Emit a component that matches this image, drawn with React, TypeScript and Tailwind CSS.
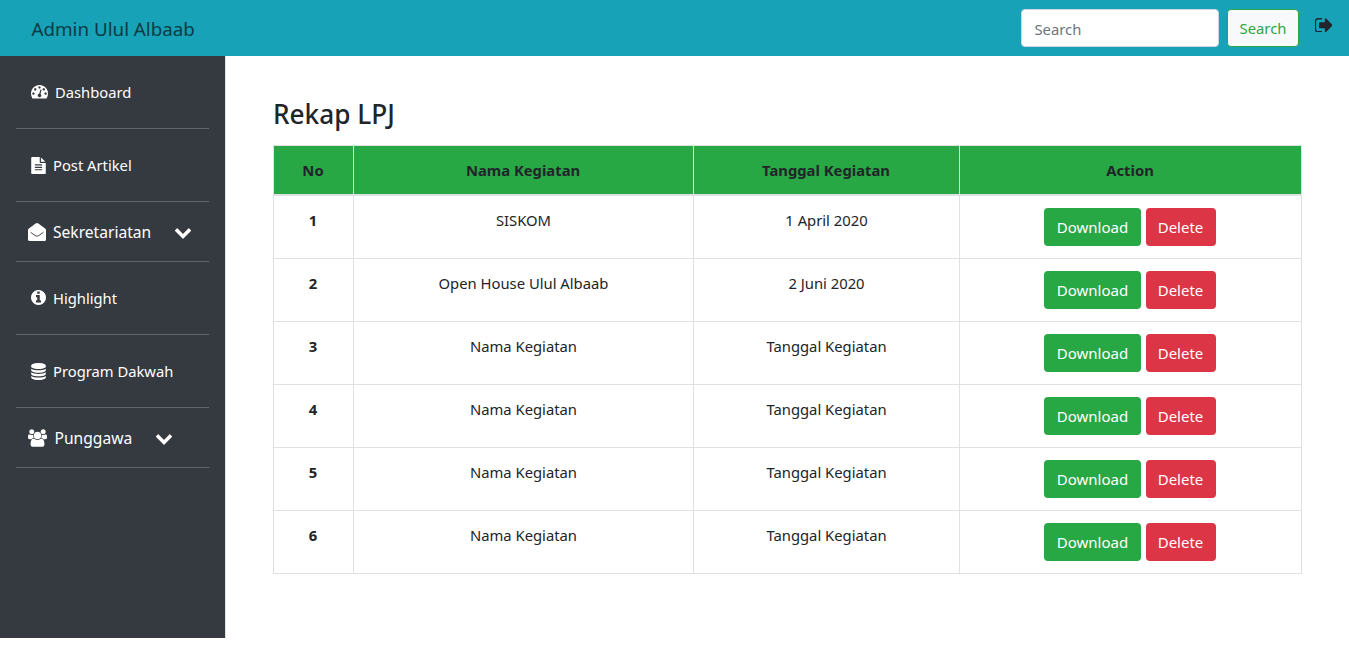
import type { ReactNode } from "react";

const rows = [
  ["SISKOM", "1 April 2020"],
  ["Open House Ulul Albaab", "2 Juni 2020"],
  ["Nama Kegiatan", "Tanggal Kegiatan"],
  ["Nama Kegiatan", "Tanggal Kegiatan"],
  ["Nama Kegiatan", "Tanggal Kegiatan"],
  ["Nama Kegiatan", "Tanggal Kegiatan"],
];

const icons = {
  dashboard:
    "M384 1152q0-53-37.5-90.5t-90.5-37.5-90.5 37.5-37.5 90.5 37.5 90.5 90.5 37.5 90.5-37.5 37.5-90.5zm192-448q0-53-37.5-90.5t-90.5-37.5-90.5 37.5-37.5 90.5 37.5 90.5 90.5 37.5 90.5-37.5 37.5-90.5zm428 481l101-382q6-26-7.5-48.5t-38.5-29.5-48 6.5-30 39.5l-101 382q-60 5-107 43.5t-63 98.5q-20 77 20 146t117 89 146-20 89-117q16-60-6-117t-72-91zm660-33q0-53-37.5-90.5t-90.5-37.5-90.5 37.5-37.5 90.5 37.5 90.5 90.5 37.5 90.5-37.5 37.5-90.5zm-640-640q0-53-37.5-90.5t-90.5-37.5-90.5 37.5-37.5 90.5 37.5 90.5 90.5 37.5 90.5-37.5 37.5-90.5zm448 192q0-53-37.5-90.5t-90.5-37.5-90.5 37.5-37.5 90.5 37.5 90.5 90.5 37.5 90.5-37.5 37.5-90.5zm320 448q0 261-141 483-19 29-54 29h-1402q-35 0-54-29-141-221-141-483 0-182 71-348t191-286 286-191 348-71 348 71 286 191 191 286 71 348z",
  file:
    "M1596 476q14 14 28 36h-472v-472q22 14 36 28zm-476 164h544v1056q0 40-28 68t-68 28h-1344q-40 0-68-28t-28-68v-1600q0-40 28-68t68-28h800v544q0 40 28 68t68 28zm160 736v-64q0-14-9-23t-23-9h-704q-14 0-23 9t-9 23v64q0 14 9 23t23 9h704q14 0 23-9t9-23zm0-256v-64q0-14-9-23t-23-9h-704q-14 0-23 9t-9 23v64q0 14 9 23t23 9h704q14 0 23-9t9-23zm0-256v-64q0-14-9-23t-23-9h-704q-14 0-23 9t-9 23v64q0 14 9 23t23 9h704q14 0 23-9t9-23z",
  info:
    "M1152 1376v-160q0-14-9-23t-23-9h-96v-512q0-14-9-23t-23-9h-320q-14 0-23 9t-9 23v160q0 14 9 23t23 9h96v320h-96q-14 0-23 9t-9 23v160q0 14 9 23t23 9h448q14 0 23-9t9-23zm-128-896v-160q0-14-9-23t-23-9h-192q-14 0-23 9t-9 23v160q0 14 9 23t23 9h192q14 0 23-9t9-23zm640 416q0 209-103 385.5t-279.5 279.5-385.5 103-385.5-103-279.5-279.5-103-385.5 103-385.5 279.5-279.5 385.5-103 385.5 103 279.5 279.5 103 385.5z",
  database:
    "M896 768q237 0 443-43t325-127v170q0 69-103 128t-280 93.5-385 34.5-385-34.5-280-93.5-103-128v-170q119 84 325 127t443 43zm0 768q237 0 443-43t325-127v170q0 69-103 128t-280 93.5-385 34.5-385-34.5-280-93.5-103-128v-170q119 84 325 127t443 43zm0-384q237 0 443-43t325-127v170q0 69-103 128t-280 93.5-385 34.5-385-34.5-280-93.5-103-128v-170q119 84 325 127t443 43zm0-1152q208 0 385 34.5t280 93.5 103 128v128q0 69-103 128t-280 93.5-385 34.5-385-34.5-280-93.5-103-128v-128q0-69 103-128t280-93.5 385-34.5z",
  users:
    "M593 896q-162 5-265 128h-134q-82 0-138-40.5t-56-118.5q0-353 124-353 6 0 43.5 21t97.5 42.5 119 21.5q67 0 133-23-5 37-5 66 0 139 81 256zm1071 637q0 120-73 189.5t-194 69.5h-874q-121 0-194-69.5t-73-189.5q0-53 3.5-103.5t14-109 26.5-108.5 43-97.5 62-81 85.5-53.5 111.5-20q10 0 43 21.5t73 48 107 48 135 21.5 135-21.5 107-48 73-48 43-21.5q61 0 111.5 20t85.5 53.5 62 81 43 97.5 26.5 108.5 14 109 3.5 103.5zm-1024-1277q0 106-75 181t-181 75-181-75-75-181 75-181 181-75 181 75 75 181zm704 384q0 159-112.5 271.5t-271.5 112.5-271.5-112.5-112.5-271.5 112.5-271.5 271.5-112.5 271.5 112.5 112.5 271.5zm576 225q0 78-56 118.5t-138 40.5h-134q-103-123-265-128 81-117 81-256 0-29-5-66 66 23 133 23 59 0 119-21.5t97.5-42.5 43.5-21q124 0 124 353zm-128-609q0 106-75 181t-181 75-181-75-75-181 75-181 181-75 181 75 75 181z",
  chevron:
    "M1683 808l-742 741q-19 19-45 19t-45-19l-742-741q-19-19-19-45.5t19-45.5l166-165q19-19 45-19t45 19l531 531 531-531q19-19 45-19t45 19l166 165q19 19 19 45.5t-19 45.5z",
  signOut:
    "M704 1440q0 4 1 20t.5 26.5-3 23.5-10 19.5-20.5 6.5h-320q-119 0-203.5-84.5t-84.5-203.5v-704q0-119 84.5-203.5t203.5-84.5h320q13 0 22.5 9.5t9.5 22.5q0 4 1 20t.5 26.5-3 23.5-10 19.5-20.5 6.5h-320q-66 0-113 47t-47 113v704q0 66 47 113t113 47h312l11.5 1 11.5 3 8 5.5 7 9 2 13.5zm928-544q0 26-19 45l-544 544q-19 19-45 19t-45-19-19-45v-288h-448q-26 0-45-19t-19-45v-384q0-26 19-45t45-19h448v-288q0-26 19-45t45-19 45 19l544 544q19 19 19 45z",
};

function Icon({ d, box, className }: { d: string; box: string; className: string }) {
  return (
    <svg viewBox={box} fill="currentColor" className={`shrink-0 ${className}`}>
      <path d={d} />
    </svg>
  );
}

function EnvelopeOpen() {
  return (
    <svg viewBox="0 0 18 18" className="mr-[7px] mb-0.5 size-[18px] shrink-0">
      <path fill="currentColor" d="M9 0 Q9.6 0 10.4 .6 L17.4 5.7 Q18 6.2 18 7 V16.4 Q18 18 16.4 18 H1.6 Q0 18 0 16.4 V7 Q0 6.2 .6 5.7 L7.6 .6 Q8.4 0 9 0Z" />
      <path fill="none" stroke="#343a40" strokeWidth="0.9" d="M2.6 9.3 L7.2 12.6 Q9 13.7 10.8 12.6 L15.4 9.3" />
    </svg>
  );
}

function Chevron() {
  return <Icon d={icons.chevron} box="0 0 1792 1792" className="mb-0.5 ml-[23px] size-[18px]" />;
}

function Item({ children }: { children: ReactNode }) {
  return (
    <a href="#" className="flex h-[73px] items-center border-b border-[#5f666c] pl-[15px] text-[14.75px]">
      {children}
    </a>
  );
}

function Group({ children }: { children: ReactNode }) {
  return (
    <button className="flex h-[60px] w-full items-center border-b border-[#5f666c] pt-0.5 pl-3 text-[15.6px]">
      {children}
    </button>
  );
}

export default function App() {
  return (
    <div className="min-h-[657px] bg-white font-['Noto_Sans',sans-serif] text-[14.8px] text-[#212529]">
      <header className="flex h-14 items-center bg-[#17a2b8] pl-[31.5px]">
        <span className="pt-0.5 text-[18.8px] leading-[30px] text-[#0b3b44]">Admin Ulul Albaab</span>
        <input placeholder="Search" className="ml-auto h-[38px] w-[198px] rounded border border-[#ced4da] bg-white px-[13px] pt-0.5 placeholder:text-[#6c757d]" />
        <button className="ml-2 h-[38px] w-[72px] rounded border border-[#28a745] bg-[#f8f9fa] pl-px text-[#28a745]">Search</button>
        <Icon d={icons.signOut} box="96 256 1536 1280" className="mr-[17px] mb-1.5 ml-4 h-[14.5px] w-[17.5px]" />
      </header>
      <div className="flex">
        <aside className="h-[582px] w-[226px] shrink-0 border-r border-[#dee2e0] bg-[#343a40] px-4 text-white">
          <Item>
            <Icon d={icons.dashboard} box="0 256 1792 1408" className="mr-[7px] h-[13.5px] w-[17px]" />
            Dashboard
          </Item>
          <Item>
            <Icon d={icons.file} box="128 0 1536 1792" className="mr-[7px] h-[17px] w-[15px]" />
            Post Artikel
          </Item>
          <Group>
            <EnvelopeOpen />
            Sekretariatan
            <Chevron />
          </Group>
          <Item>
            <Icon d={icons.info} box="128 128 1536 1536" className="mr-[7px] mb-0.5 size-[15px]" />
            Highlight
          </Item>
          <Item>
            <Icon d={icons.database} box="128 0 1536 1792" className="mr-[7px] h-[17px] w-[15px]" />
            Program Dakwah
          </Item>
          <Group>
            <Icon d={icons.users} box="0 0 1920 1792" className="mr-[7.5px] mb-0.5 h-[18px] w-[19px]" />
            Punggawa
            <Chevron />
          </Group>
        </aside>
        <main className="pt-[41px] pl-[47px]">
          <h1 className="h-12 text-[26.2px] leading-[34px] font-medium">Rekap LPJ</h1>
          <table className="w-[1029px] table-fixed border-separate border-spacing-0 border-t border-l border-[#dee2e6] text-center">
            <colgroup>
              <col className="w-[80px]" />
              <col className="w-[340px]" />
              <col className="w-[266px]" />
              <col className="w-[342px]" />
            </colgroup>
            <thead>
              <tr className="h-[50px] bg-[#28a745]">
                {["No", "Nama Kegiatan", "Tanggal Kegiatan", "Action"].map((h) => (
                  <th key={h} className="border-r border-b-2 border-[#dee2e6] p-0 pr-px font-bold">{h}</th>
                ))}
              </tr>
            </thead>
            <tbody>
              {rows.map(([name, date], i) => (
                <tr key={i} className="h-[63px] align-top">
                  <th className="border-r border-b border-[#dee2e6] p-0 pt-3 pr-px leading-6">{i + 1}</th>
                  <td className="border-r border-b border-[#dee2e6] p-0 pt-3 leading-6">{name}</td>
                  <td className="border-r border-b border-[#dee2e6] p-0 pt-3 leading-6">{date}</td>
                  <td className="border-r border-b border-[#dee2e6] p-0 pt-3 pr-0.5">
                    <div className="flex justify-center gap-[5px] text-[15px] text-white">
                      <button className="h-[38px] w-[97px] rounded bg-[#28a745] pl-px">Download</button>
                      <button className="h-[38px] w-[70px] rounded bg-[#dc3545]">Delete</button>
                    </div>
                  </td>
                </tr>
              ))}
            </tbody>
          </table>
        </main>
      </div>
    </div>
  );
}
